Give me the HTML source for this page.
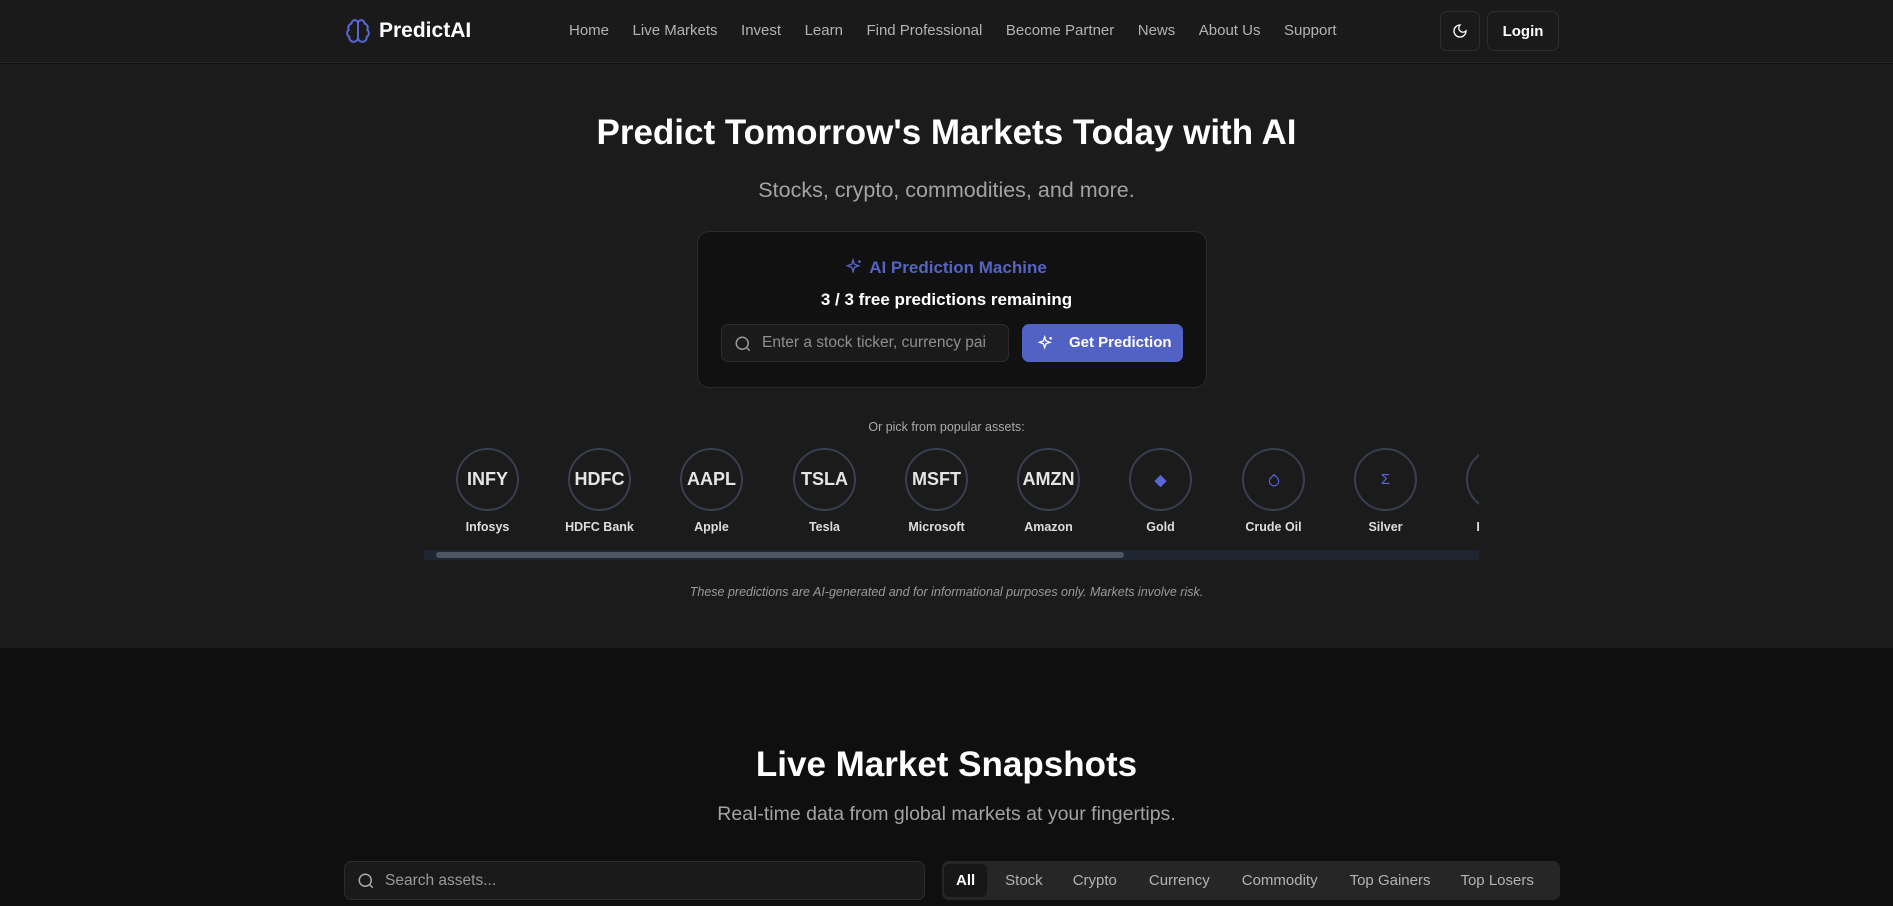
<!DOCTYPE html>
<html><head><meta charset="utf-8"><style>
*{box-sizing:border-box;margin:0;padding:0}
html,body{width:1893px;height:906px;overflow:hidden}
body{background:#0f0f0f;font-family:"Liberation Sans",sans-serif;color:#fff;position:relative}
.nav{position:absolute;left:0;top:0;width:1893px;height:63px;background:#1a1a1a;border-bottom:1px solid #262626}
.logo{position:absolute;left:345px;top:17px;display:flex;align-items:center;gap:8px;font-weight:bold;font-size:21px}
.links{position:absolute;left:569px;top:22px;display:flex;gap:23.5px;font-size:15px;color:#b3b3b3}
.btn{position:absolute;top:11px;height:40px;border:1px solid #2c2c2c;border-radius:7px;background:#1a1a1a;display:flex;align-items:center;justify-content:center;font-size:15px;font-weight:bold}
.hero{position:absolute;left:0;top:64px;width:1893px;height:584px;background:#1b1b1b}
.c{position:absolute;left:0;width:1893px;text-align:center}
.card{position:absolute;left:697px;top:231px;width:510px;height:157px;background:#111;border:1px solid #2a2a2a;border-radius:12px}
.inp{position:absolute;left:721px;top:324px;width:288px;height:38px;border:1px solid #2c2c2c;border-radius:7px;background:#1a1a1a;color:#8f8f8f;font-size:15.5px;padding-left:40px;line-height:36px;white-space:nowrap;overflow:hidden}
.gp{position:absolute;left:1022px;top:324px;width:161px;height:38px;border-radius:7px;background:#5262c4;font-weight:bold;font-size:15px;line-height:38px;padding-left:47px;white-space:nowrap}
.as{position:absolute;top:8px;width:63px;text-align:center}
.ci{width:63px;height:63px;border:2px solid #38404f;border-radius:50%;display:flex;align-items:center;justify-content:center;font-weight:bold;font-size:18px;color:#e5e5e5}
.lb{margin-top:9px;font-size:12.5px;font-weight:bold;color:#ddd;white-space:nowrap;margin-left:-30px;margin-right:-30px}
</style></head><body>
<div class="nav">
<div class="logo"><svg width="26" height="28" viewBox="0 0 24 24" fill="none" stroke="#5a67d8" stroke-width="1.8"><path d="M12 5a3 3 0 1 0-5.997.125 4 4 0 0 0-2.526 5.77 4 4 0 0 0 .556 6.588A4 4 0 1 0 12 18Z"/><path d="M12 5a3 3 0 1 1 5.997.125 4 4 0 0 1 2.526 5.77 4 4 0 0 1-.556 6.588A4 4 0 1 1 12 18Z"/><path d="M12 5v13"/></svg>PredictAI</div>
<div class="links"><span>Home</span><span>Live Markets</span><span>Invest</span><span>Learn</span><span>Find Professional</span><span>Become Partner</span><span>News</span><span>About Us</span><span>Support</span></div>
<div class="btn" style="left:1440px;width:40px"><svg width="16" height="16" viewBox="0 0 24 24" fill="none" stroke="#fff" stroke-width="2"><path d="M12 3a6 6 0 0 0 9 9 9 9 0 1 1-9-9Z"/></svg></div>
<div class="btn" style="left:1487px;width:72px">Login</div>
</div>
<div class="hero"></div>
<div class="c" style="top:113px;font-size:35px;font-weight:bold">Predict Tomorrow's Markets Today with AI</div>
<div class="c" style="top:178px;font-size:21.5px;color:#a3a3a3">Stocks, crypto, commodities, and more.</div>
<div class="card"></div>
<div class="c" style="top:258px;font-size:17px;font-weight:bold;color:#5563c1"><svg width="17" height="17" viewBox="0 0 24 24" fill="none" stroke="#5563c1" stroke-width="2" style="vertical-align:-2px;margin-right:6px"><path d="M10 3l1.9 5.8L18 11l-6.1 2.2L10 19l-1.9-5.8L2 11l6.1-2.2Z"/><path d="M19 3v4M17 5h4"/></svg>AI Prediction Machine</div>
<div class="c" style="top:290px;font-size:17px;font-weight:bold">3 / 3 free predictions remaining</div>
<div class="inp"><svg style="position:absolute;left:12px;top:10px" width="18" height="18" viewBox="0 0 24 24" fill="none" stroke="#999" stroke-width="2"><circle cx="11" cy="11" r="8"/><path d="m21 21-4.3-4.3"/></svg>Enter a stock ticker, currency pai</div>
<div class="gp"><svg style="position:absolute;left:16px;top:11px" width="16" height="16" viewBox="0 0 24 24" fill="none" stroke="#fff" stroke-width="2"><path d="M10 3l1.9 5.8L18 11l-6.1 2.2L10 19l-1.9-5.8L2 11l6.1-2.2Z"/><path d="M19 3v4M17 5h4"/></svg>Get Prediction</div>
<div class="c" style="top:420px;font-size:12.5px;color:#aaa">Or pick from popular assets:</div>
<div style="position:absolute;left:424px;top:440px;width:1055px;height:110px;overflow:hidden">
<div class="as" style="left:32px"><div class="ci">INFY</div><div class="lb">Infosys</div></div>
<div class="as" style="left:144px"><div class="ci">HDFC</div><div class="lb">HDFC Bank</div></div>
<div class="as" style="left:256px"><div class="ci">AAPL</div><div class="lb">Apple</div></div>
<div class="as" style="left:369px"><div class="ci">TSLA</div><div class="lb">Tesla</div></div>
<div class="as" style="left:481px"><div class="ci">MSFT</div><div class="lb">Microsoft</div></div>
<div class="as" style="left:593px"><div class="ci">AMZN</div><div class="lb">Amazon</div></div>
<div class="as" style="left:705px"><div class="ci" style="color:#5a67d8;font-size:15px">◆</div><div class="lb">Gold</div></div>
<div class="as" style="left:818px"><div class="ci"><svg width="14" height="16" viewBox="0 0 24 24" fill="none" stroke="#5a67d8" stroke-width="2"><path d="M12 2.7l5.7 5.7a8 8 0 1 1-11.3 0z"/></svg></div><div class="lb">Crude Oil</div></div>
<div class="as" style="left:930px"><div class="ci" style="color:#5a67d8;font-size:15px;font-weight:normal">Σ</div><div class="lb">Silver</div></div>
<div class="as" style="left:1042px"><div class="ci"></div><div class="lb">Bitcoin</div></div>
</div>
<div style="position:absolute;left:424px;top:550px;width:1055px;height:10px;background:#1e2530"><div style="position:absolute;left:12px;top:2px;width:688px;height:6px;border-radius:3px;background:#4b5563"></div></div>
<div class="c" style="top:585px;font-size:12.5px;font-style:italic;color:#9a9a9a">These predictions are AI-generated and for informational purposes only. Markets involve risk.</div>
<div class="c" style="top:745px;font-size:35px;font-weight:bold">Live Market Snapshots</div>
<div class="c" style="top:803px;font-size:19.5px;color:#a3a3a3">Real-time data from global markets at your fingertips.</div>
<div style="position:absolute;left:344px;top:861px;width:581px;height:39px;border:1px solid #2c2c2c;border-radius:7px;background:#1a1a1a;color:#9a9a9a;font-size:15.5px;line-height:37px;padding-left:40px"><svg style="position:absolute;left:12px;top:10px" width="18" height="18" viewBox="0 0 24 24" fill="none" stroke="#aaa" stroke-width="2"><circle cx="11" cy="11" r="8"/><path d="m21 21-4.3-4.3"/></svg>Search assets...</div>
<div style="position:absolute;left:942px;top:861px;width:618px;height:39px;border-radius:7px;background:#262626;display:flex;align-items:center;font-size:15px;color:#b3b3b3;padding-left:2px;white-space:nowrap;overflow:hidden">
<span style="background:#171717;color:#fff;font-weight:bold;padding:8px 12px;border-radius:5px">All</span>
<span style="margin-left:18px">Stock</span><span style="margin-left:30px">Crypto</span><span style="margin-left:32px">Currency</span><span style="margin-left:32px">Commodity</span><span style="margin-left:32px">Top Gainers</span><span style="margin-left:30px">Top Losers</span></div>
</body></html>
